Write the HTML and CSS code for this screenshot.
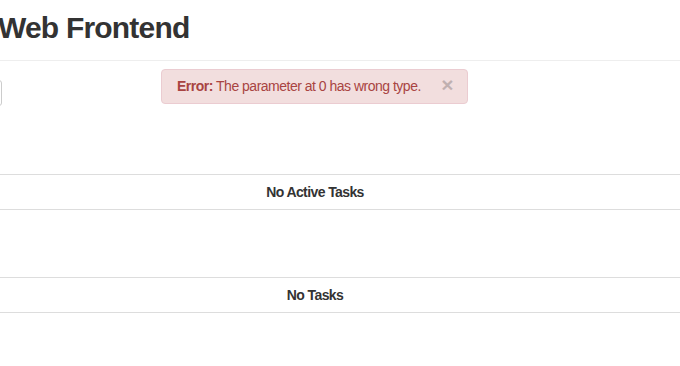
FILE: index.html
```html
<!DOCTYPE html>
<html>
<head>
  <meta charset="UTF-8">
  <title>Web Frontend</title>
  <link rel="stylesheet" href="styles.css">
</head>
<body>
  <div class="page-header">
    <h1 class="title">Web Frontend</h1>
  </div>

  <div class="toolbar">
    <button class="button" aria-label="Add"></button>
    <div class="alert">
      <strong>Error:</strong> The parameter at 0 has wrong type.
      <span class="close">&times;</span>
    </div>
  </div>

  <div class="tasks active-tasks">
    <table class="table">
      <tr><td class="empty">No Active Tasks</td></tr>
    </table>
  </div>

  <div class="tasks all-tasks">
    <table class="table">
      <tr><td class="empty">No Tasks</td></tr>
    </table>
  </div>
</body>
</html>
```

FILE: styles.css
```css
body {
  margin: 0;
  font-family: "Liberation Sans", Arial, sans-serif;
  font-size: 14px;
  line-height: 20px;
  color: #333;
  background: #fff;
  overflow: hidden;
}

.page-header {
  padding: 10px 0 14px;
  border-bottom: 1px solid #eee;
}

.title {
  margin: 0 0 0 -2px;
  font-size: 30px;
  line-height: 36px;
  font-weight: bold;
  letter-spacing: -0.8px;
  color: #333;
}

.toolbar {
  display: flex;
  align-items: flex-start;
  width: 627px;
  padding-top: 8px;
}

.button {
  margin: 11px 0 0 -60px;
  width: 62px;
  height: 26px;
  border: 1px solid #ccc;
  border-radius: 3px;
  background: #fff;
  flex-shrink: 0;
}

.alert {
  position: relative;
  margin: 0 auto;
  width: 307px;
  box-sizing: border-box;
  padding: 6px 35px 7px 15px;
  border: 1px solid #ebccd1;
  border-radius: 4px;
  background: #f2dede;
  color: #a94442;
  letter-spacing: -0.5px;
  white-space: nowrap;
}

.close {
  position: absolute;
  right: 14px;
  top: 5px;
  font-size: 21px;
  font-weight: bold;
  line-height: 20px;
  color: #000;
  opacity: 0.2;
}

.tasks {
  margin-left: -50px;
  width: 730px;
}

.active-tasks {
  margin-top: 68px;
}

.all-tasks {
  margin-top: 67px;
}

.table {
  width: 100%;
  border-collapse: collapse;
}

.table td {
  padding: 7px 8px;
  border-top: 1px solid #ddd;
  border-bottom: 1px solid #ddd;
}

.empty {
  text-align: center;
  font-weight: bold;
  letter-spacing: -0.6px;
}
```
